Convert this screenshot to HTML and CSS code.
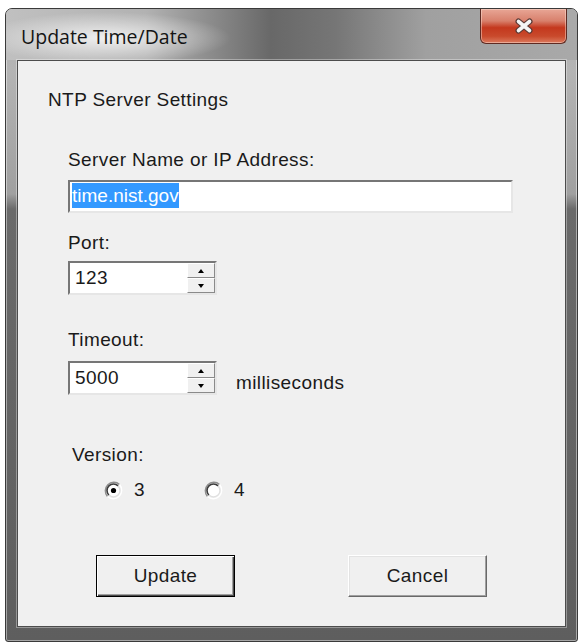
FILE: index.html
```html
<!DOCTYPE html>
<html lang="en">
<head>
    <meta charset="UTF-8">
    <title>Update Time/Date</title>
    <link rel="stylesheet" href="styles.css">
</head>
<body>

<div class="window">
    <div class="titlebar">
        <span class="title">Update Time/Date</span>
        <button type="button" class="close-btn">
            <svg width="20" height="16" viewBox="0 0 20 16">
                <path d="M4.5 3.5 L15.5 12.5 M15.5 3.5 L4.5 12.5" stroke="#5a3a36" stroke-width="6" stroke-linecap="round"/>
                <path d="M4.5 3.5 L15.5 12.5 M15.5 3.5 L4.5 12.5" stroke="#f4f4f4" stroke-width="3.6" stroke-linecap="round"/>
            </svg>
        </button>
    </div>

    <div class="client">
        <div class="group-title">NTP Server Settings</div>

        <div class="fields">
            <div class="label label-server">Server Name or IP Address:</div>
            <div class="textbox textbox-wide"><span class="selected">time.nist.gov</span></div>

            <div class="label label-port">Port:</div>
            <div class="textbox textbox-spin">
                <span class="value">123</span>
                <div class="spinner">
                    <div class="spin-btn"><span class="arrow-up"></span></div>
                    <div class="spin-btn"><span class="arrow-down"></span></div>
                </div>
            </div>

            <div class="label label-timeout">Timeout:</div>
            <div class="spin-row">
                <div class="textbox textbox-spin">
                    <span class="value">5000</span>
                    <div class="spinner">
                        <div class="spin-btn"><span class="arrow-up"></span></div>
                        <div class="spin-btn"><span class="arrow-down"></span></div>
                    </div>
                </div>
                <span class="unit">milliseconds</span>
            </div>
        </div>

        <div class="label label-version">Version:</div>
        <div class="radio-row">
            <div class="radio-item">
                <svg class="radio" width="19" height="19" viewBox="0 0 19 19">
                    <circle cx="9.5" cy="9.5" r="7" fill="#fff"/>
                    <path d="M3.5 15.5 A8.5 8.5 0 0 1 15.5 3.5" fill="none" stroke="#8e8e8e" stroke-width="1.5"/>
                    <path d="M4.9 14.1 A6.5 6.5 0 0 1 14.1 4.9" fill="none" stroke="#3c3c3c" stroke-width="1.6"/>
                    <path d="M15.5 3.5 A8.5 8.5 0 0 1 3.5 15.5" fill="none" stroke="#fff" stroke-width="1.5"/>
                    <path d="M14.1 4.9 A6.5 6.5 0 0 1 4.9 14.1" fill="none" stroke="#e0e0e0" stroke-width="1.4"/>
                    <circle cx="9.5" cy="9.5" r="2.6" fill="#000"/>
                </svg>
                <span>3</span>
            </div>
            <div class="radio-item">
                <svg class="radio" width="19" height="19" viewBox="0 0 19 19">
                    <circle cx="9.5" cy="9.5" r="7" fill="#fff"/>
                    <path d="M3.5 15.5 A8.5 8.5 0 0 1 15.5 3.5" fill="none" stroke="#8e8e8e" stroke-width="1.5"/>
                    <path d="M4.9 14.1 A6.5 6.5 0 0 1 14.1 4.9" fill="none" stroke="#3c3c3c" stroke-width="1.6"/>
                    <path d="M15.5 3.5 A8.5 8.5 0 0 1 3.5 15.5" fill="none" stroke="#fff" stroke-width="1.5"/>
                    <path d="M14.1 4.9 A6.5 6.5 0 0 1 4.9 14.1" fill="none" stroke="#e0e0e0" stroke-width="1.4"/>
                </svg>
                <span>4</span>
            </div>
        </div>

        <div class="buttons">
            <button type="button" class="btn btn-default">Update</button>
            <button type="button" class="btn">Cancel</button>
        </div>
    </div>
</div>

</body>
</html>
```

FILE: styles.css
```css
body {
    margin: 0;
    padding: 8px 0 0 5px;
    background-color: #fff;
    font-family: "Liberation Sans", Arial, sans-serif;
    font-size: 19px;
    letter-spacing: 0.4px;
    color: #1a1a1a;
}

/* Marco de la ventana */
.window {
    width: 571px;
    border: 1px solid #3a3a3a;
    border-radius: 7px 7px 3px 3px;
    background: linear-gradient(to bottom, #adadad 0, #b4b4b4 60px, #a0a0a0 185px, #6a6a6a 200px, #5e5e5e 100%);
    box-shadow: inset 0 0 0 1px rgba(255, 255, 255, 0.45);
    padding-bottom: 14px;
}

.titlebar {
    display: flex;
    justify-content: space-between;
    align-items: flex-start;
    height: 51px;
    border-radius: 6px 6px 0 0;
    background:
        radial-gradient(ellipse 125px 26px at 100px 29px, rgba(255, 255, 255, 0.8), rgba(255, 255, 255, 0)),
        linear-gradient(to right, #c0c0c0 0, #b2b2b2 140px, #686868 265px, #767676 330px, #a0a0a0 420px, #a9a9a9 100%);
}

.title {
    font-family: "Open Sans", "Noto Sans", sans-serif;
    font-size: 19.5px;
    letter-spacing: 0;
    line-height: 26px;
    padding: 15px 0 0 15px;
    color: #141414;
}

.close-btn {
    width: 87px;
    height: 35px;
    margin-right: 10px;
    padding: 0;
    border: 1px solid #5e2a22;
    border-top: none;
    border-radius: 0 0 6px 6px;
    background: linear-gradient(to bottom, #e8a696 0, #d8806c 35%, #c4381e 55%, #c94a2c 80%, #dc7a5e 100%);
    box-shadow: inset 0 0 0 1px rgba(255, 230, 220, 0.45);
    display: flex;
    align-items: center;
    justify-content: center;
}

/* Área de cliente */
.client {
    margin: 0 11px;
    height: 565px;
    border: 1px solid #4c4c4c;
    background-color: #f0f0f0;
    box-shadow: 0 0 0 1px rgba(255, 255, 255, 0.35);
}

.group-title {
    line-height: 22px;
    margin: 28px 0 0 30px;
}

.fields {
    padding-left: 50px;
}

.label {
    line-height: 22px;
}

.label-server {
    margin-top: 38px;
}

.label-port {
    margin-top: 19px;
}

.label-timeout {
    margin-top: 34px;
}

.label-version {
    margin: 49px 0 0 54px;
}

/* Cajas de texto estilo clásico */
.textbox {
    box-sizing: border-box;
    background-color: #fff;
    border-top: 2px solid #767676;
    border-left: 2px solid #767676;
    border-right: 2px solid #e6e6e6;
    border-bottom: 2px solid #e6e6e6;
}

.textbox-wide {
    width: 445px;
    height: 33px;
    margin-top: 9px;
    padding: 1px 0 0 2px;
}

.selected {
    display: inline-block;
    line-height: 25px;
    background-color: #3399ff;
    color: #fff;
    letter-spacing: 0;
}

.textbox-spin {
    display: flex;
    justify-content: space-between;
    width: 149px;
    height: 34px;
    margin-top: 7px;
}

.spin-row .textbox-spin {
    margin-top: 0;
}

.value {
    line-height: 30px;
    padding-left: 5px;
}

.spinner {
    display: flex;
    flex-direction: column;
    width: 28px;
}

.spin-btn {
    flex: 1;
    display: flex;
    align-items: center;
    justify-content: center;
    background-color: #f0f0f0;
    border-top: 1px solid #fff;
    border-left: 1px solid #fff;
    border-right: 1px solid #8a8a8a;
    border-bottom: 1px solid #8a8a8a;
}

.arrow-up {
    width: 0;
    height: 0;
    border-left: 3px solid transparent;
    border-right: 3px solid transparent;
    border-bottom: 4px solid #000;
}

.arrow-down {
    width: 0;
    height: 0;
    border-left: 3px solid transparent;
    border-right: 3px solid transparent;
    border-top: 4px solid #000;
}

.spin-row {
    display: flex;
    margin-top: 10px;
}

.unit {
    align-self: flex-end;
    line-height: 22px;
    margin: 0 0 1px 19px;
}

/* Radio buttons */
.radio-row {
    display: flex;
    margin: 13px 0 0 86px;
}

.radio-item {
    display: flex;
    align-items: center;
    width: 100px;
    line-height: 22px;
}

.radio {
    margin-right: 11px;
}

/* Botones */
.buttons {
    display: flex;
    gap: 113px;
    margin: 54px 0 0 78px;
}

.btn {
    box-sizing: border-box;
    width: 139px;
    height: 42px;
    font-family: "Liberation Sans", Arial, sans-serif;
    font-size: 19px;
    letter-spacing: 0.4px;
    color: #1a1a1a;
    background-color: #f0f0f0;
    border-top: 1px solid #fff;
    border-left: 1px solid #fff;
    border-right: 1px solid #696969;
    border-bottom: 1px solid #696969;
    box-shadow: inset -1px -1px 0 #a0a0a0, inset 1px 1px 0 #e3e3e3;
    padding: 0;
}

.btn-default {
    border: 1px solid #000;
    box-shadow: inset 1px 1px 0 #fff, inset -1px -1px 0 #4a4a4a, inset -2px -2px 0 #a0a0a0;
}
```
